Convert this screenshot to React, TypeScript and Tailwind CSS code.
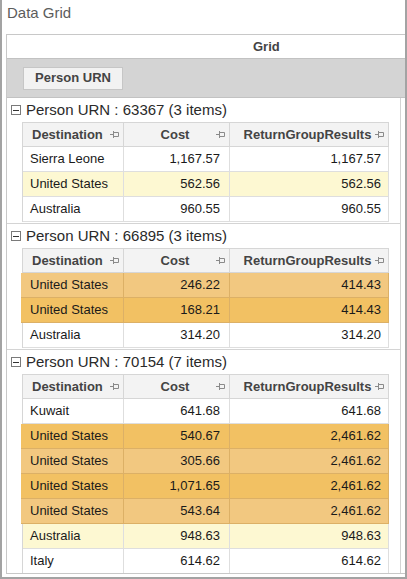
type Row = { dest: string; cost: string; ret: string; tone?: "yellow" | "light" | "dark" }
type Group = { urn: string; rows: Row[] }

const groups: Group[] = [
  {
    urn: "63367",
    rows: [
      { dest: "Sierra Leone", cost: "1,167.57", ret: "1,167.57" },
      { dest: "United States", cost: "562.56", ret: "562.56", tone: "yellow" },
      { dest: "Australia", cost: "960.55", ret: "960.55" },
    ],
  },
  {
    urn: "66895",
    rows: [
      { dest: "United States", cost: "246.22", ret: "414.43", tone: "light" },
      { dest: "United States", cost: "168.21", ret: "414.43", tone: "dark" },
      { dest: "Australia", cost: "314.20", ret: "314.20" },
    ],
  },
  {
    urn: "70154",
    rows: [
      { dest: "Kuwait", cost: "641.68", ret: "641.68" },
      { dest: "United States", cost: "540.67", ret: "2,461.62", tone: "dark" },
      { dest: "United States", cost: "305.66", ret: "2,461.62", tone: "light" },
      { dest: "United States", cost: "1,071.65", ret: "2,461.62", tone: "dark" },
      { dest: "United States", cost: "543.64", ret: "2,461.62", tone: "light" },
      { dest: "Australia", cost: "948.63", ret: "948.63", tone: "yellow" },
      { dest: "Italy", cost: "614.62", ret: "614.62" },
    ],
  },
]

function Pin() {
  return (
    <svg width="10" height="9" viewBox="0 0 10 9" fill="none" stroke="#8a8a8a" strokeWidth="1" className="shrink-0">
      <path d="M0 4.5H3.5M3.5 1V8M3.5 2.5H8.5V6.5H3.5" />
    </svg>
  )
}

function Minus() {
  return (
    <span className="w-[10px] h-[10px] border border-[#7a7a7a] bg-white flex items-center justify-center shrink-0">
      <span className="w-[6px] h-px bg-[#333]" />
    </span>
  )
}

function HeaderCell({ label, width, align }: { label: string; width: string; align: "left" | "center" }) {
  return (
    <div className={`${width} h-full flex items-center border-r border-[#d6d6d6] pr-[3px] ${align === "left" ? "pl-[9px]" : "pl-[10px]"}`}>
      <span className={`flex-1 font-bold text-[#444] ${align === "center" ? "text-center" : ""}`}>{label}</span>
      <Pin />
    </div>
  )
}

function DataRow({ row }: { row: Row }) {
  const hot = row.tone === "dark" || row.tone === "light"
  const bg =
    row.tone === "dark"
      ? "bg-[#f2c163] border-[#dcb066] -ml-[2px] pl-[2px]"
      : row.tone === "light"
      ? "bg-[#f2c880] border-[#dcb066] -ml-[2px] pl-[2px]"
      : row.tone === "yellow"
      ? "bg-[#fdf8d2] border-[#dedede]"
      : "bg-white border-[#dedede]"
  const cell = hot ? "border-[#dcb066]" : "border-[#dedede]"
  return (
    <div className={`flex h-[25px] border-b text-[#1a1a1a] ${bg}`}>
      <div className={`w-[101px] border-r ${cell} pl-[7px] flex items-center`}>{row.dest}</div>
      <div className={`w-[106px] border-r ${cell} pr-[9px] flex items-center justify-end`}>{row.cost}</div>
      <div className={`w-[159px] border-r ${cell} pr-[7px] flex items-center justify-end`}>{row.ret}</div>
    </div>
  )
}

function GroupBlock({ group }: { group: Group }) {
  return (
    <div className="border-b border-[#d4d4d4] pb-px">
      <div className="h-[24px] flex items-center gap-[5px] pl-[4px] text-[#2a2a2a]">
        <Minus />
        <span className="text-[15px]">
          Person URN : {group.urn} ({group.rows.length} items)
        </span>
      </div>
      <div className="ml-[15px] w-[367px] border-l border-[#d6d6d6]">
        <div className="flex h-[25px] bg-[#f3f3f3] border-y border-[#d6d6d6]">
          <HeaderCell label="Destination" width="w-[101px]" align="left" />
          <HeaderCell label="Cost" width="w-[106px]" align="center" />
          <HeaderCell label="ReturnGroupResults" width="w-[159px]" align="center" />
        </div>
        {group.rows.map((r, i) => (
          <DataRow key={i} row={r} />
        ))}
      </div>
    </div>
  )
}

export default function App() {
  return (
    <div
      className="w-[407px] h-[579px] bg-white border-x-2 border-b-2 border-[#a3a3a3] flex flex-col text-[13px] text-[#1e1e1e] overflow-hidden"
      style={{ fontFamily: '"Liberation Sans", Arial, sans-serif' }}
    >
      <div className="h-[34px] pl-[5px] pt-[2px] text-[15px] text-[#5c5c5c] leading-[22px]">Data Grid</div>
      <div className="ml-[4px] h-[540px] border-l border-t border-b border-[#c8c8c8] flex flex-col">
        <div className="h-[23px] flex items-center pl-[246px] font-bold text-[#444]">Grid</div>
        <div className="h-[40px] bg-[#d4d4d4] border-t border-b border-[#c2c2c2] flex items-center pl-[16px]">
          <div className="w-[100px] h-[23px] bg-[#f2f2f2] border border-[#c6c6c6] flex items-center justify-center font-bold text-[#444]">
            Person URN
          </div>
        </div>
        <div className="flex-1 mr-[4px] border-r border-[#d4d4d4] overflow-hidden">
          {groups.map((g) => (
            <GroupBlock key={g.urn} group={g} />
          ))}
        </div>
      </div>
    </div>
  )
}
